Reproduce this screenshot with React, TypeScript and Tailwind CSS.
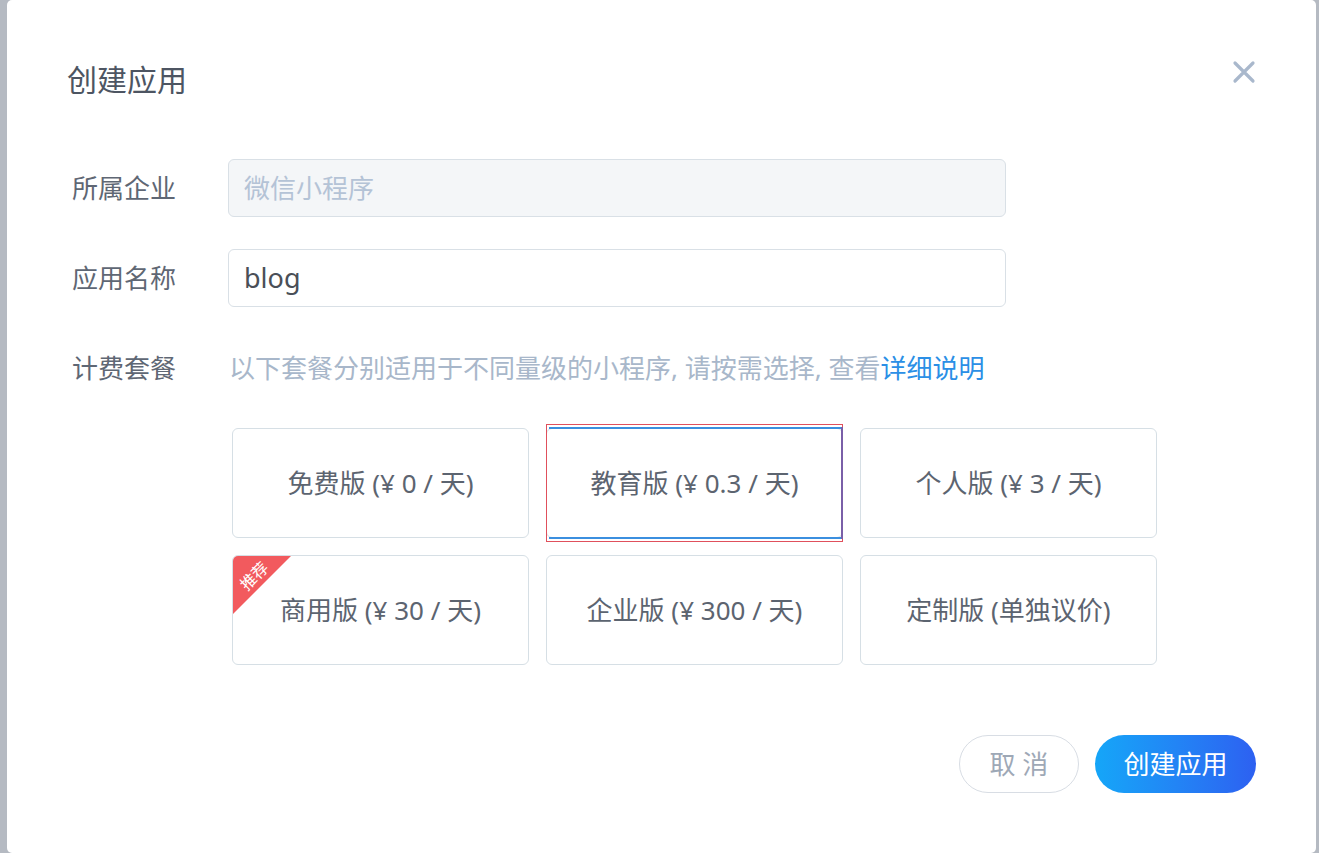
import React from "react";

const font = { fontFamily: '"Noto Sans", "Noto Sans CJK SC", sans-serif' };

function Card({ text, selected, tag }: { text: string; selected?: boolean; tag?: boolean }) {
  return (
    <div className="relative h-[110px]">
      <div className="relative flex h-full items-center justify-center overflow-hidden rounded-[6px] border border-[#d6dfe5] bg-white text-[26px] text-[#5c6470]">
        {tag && (
          <div className="absolute left-0 top-0 h-[58px] w-[58px] bg-[#f25a5e] [clip-path:polygon(0_0,100%_0,0_100%)]">
            <span className="absolute left-[5px] top-[12px] -rotate-45 text-[16px] leading-none text-white">推荐</span>
          </div>
        )}
        <span>{text}</span>
      </div>
      {selected && (
        <>
          <div className="pointer-events-none absolute -top-[4px] -bottom-[4px] left-0 right-0 border border-[#e0505c]" />
          <div className="pointer-events-none absolute left-[3px] right-[2px] -top-[1px] h-[2px] bg-[#3b8fdf]" />
          <div className="pointer-events-none absolute left-[3px] right-[2px] -bottom-[1px] h-[2px] bg-[#3b8fdf]" />
          <div className="pointer-events-none absolute -top-[1px] -bottom-[1px] right-[0px] w-[2px] bg-[#7a5fa8]" />
        </>
      )}
    </div>
  );
}

export default function App() {
  return (
    <div className="flex h-[853px] w-full bg-[#b5bac2] pl-[7px] pr-[3px]" style={font}>
      <div className="flex flex-1 flex-col rounded-[5px] bg-white pl-[60px] pr-[60px]">
        {/* header */}
        <div className="flex items-start justify-between pt-[58px]">
          <h1 className="text-[30px] leading-[44px] text-[#4d5562]">创建应用</h1>
          <button className="mt-[2px] text-[#a9b8cc]" aria-label="close">
            <svg width="24" height="24" viewBox="0 0 24 24" fill="none" stroke="currentColor" strokeWidth="3.2" strokeLinecap="round">
              <path d="M3 3L21 21M21 3L3 21" />
            </svg>
          </button>
        </div>

        {/* form */}
        <div className="mt-[57px] flex flex-col gap-[32px]">
          <div className="flex items-center">
            <div className="w-[161px] pl-[5px] text-[26px] text-[#5f6774]">所属企业</div>
            <div className="flex h-[58px] w-[778px] items-center rounded-[6px] border border-[#d9e0e6] bg-[#f4f6f8] pl-[15px] text-[26px] text-[#b4c3d6]">
              微信小程序
            </div>
          </div>
          <div className="flex items-center">
            <div className="w-[161px] pl-[5px] text-[26px] text-[#5f6774]">应用名称</div>
            <div className="flex h-[58px] w-[778px] items-center rounded-[6px] border border-[#d9e0e6] bg-white pl-[15px] text-[27px] text-[#4a4f57]">
              blog
            </div>
          </div>
          <div className="flex h-[58px] items-center">
            <div className="w-[161px] pl-[5px] text-[26px] text-[#5f6774]">计费套餐</div>
            <div className="pl-[1px] text-[26px] text-[#a8b7ca]">
              以下套餐分别适用于不同量级的小程序, 请按需选择, 查看<span className="text-[#2b8fe6]">详细说明</span>
            </div>
          </div>
        </div>

        {/* plans */}
        <div className="ml-[165px] mt-[31px] grid w-[925px] grid-cols-3 gap-[17px]">
          <Card text="免费版 (¥ 0 / 天)" />
          <Card text="教育版 (¥ 0.3 / 天)" selected />
          <Card text="个人版 (¥ 3 / 天)" />
          <Card text="商用版 (¥ 30 / 天)" tag />
          <Card text="企业版 (¥ 300 / 天)" />
          <Card text="定制版 (单独议价)" />
        </div>

        {/* footer */}
        <div className="mt-[70px] flex justify-end gap-[16px]">
          <button className="h-[58px] w-[120px] rounded-full border border-[#d8dde4] bg-white text-[26px] text-[#9ea8b6]">
            取 消
          </button>
          <button className="h-[58px] w-[161px] rounded-full bg-gradient-to-r from-[#15a6f8] to-[#2d60f1] text-[26px] text-white">
            创建应用
          </button>
        </div>
      </div>
    </div>
  );
}
